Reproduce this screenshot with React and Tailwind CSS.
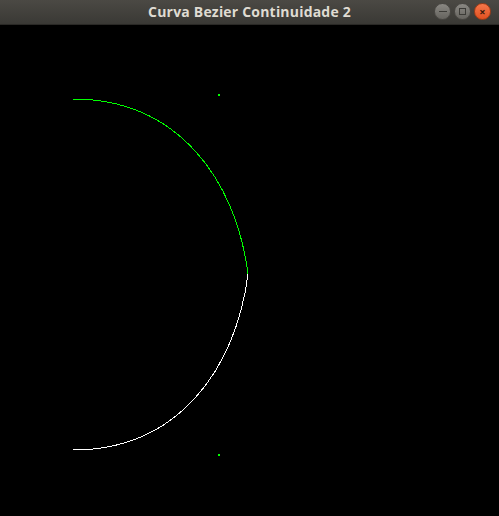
export default function App() {
  return (
    <div className="w-[499px] h-[516px] flex flex-col bg-black overflow-hidden">
      <div className="h-[25px] shrink-0 flex items-center relative bg-gradient-to-b from-[#4b4944] to-[#3a3935] border-b border-[#2a2926]">
        <div
          className="flex-1 text-center text-[14px] font-bold text-[#dfdbd2] leading-none tracking-[0.2px]"
          style={{ fontFamily: '"Open Sans", "DejaVu Sans", sans-serif' }}
        >
          Curva Bezier Continuidade 2
        </div>
        <div className="absolute right-[8px] top-[3px] flex gap-[3px]">
          <div className="w-[17px] h-[17px] rounded-full bg-gradient-to-b from-[#8a8883] to-[#66645f] border border-[#4a4844] flex items-center justify-center">
            <div className="w-[8px] h-[1.5px] bg-[#3c3b37]" />
          </div>
          <div className="w-[17px] h-[17px] rounded-full bg-gradient-to-b from-[#8a8883] to-[#66645f] border border-[#4a4844] flex items-center justify-center">
            <div className="w-[7px] h-[7px] border-[1.5px] border-[#3c3b37]" />
          </div>
          <div className="w-[17px] h-[17px] rounded-full bg-gradient-to-b from-[#f6774a] to-[#e0501f] border border-[#a33c16] flex items-center justify-center text-[#3c1a0b] text-[11px] leading-none font-bold">
            ×
          </div>
        </div>
      </div>
      <svg width="499" height="491" className="block bg-black" shapeRendering="crispEdges">
        <path d="M73,74 C178,74 236,155 248,249" fill="none" stroke="#00ff00" strokeWidth="1" />
        <path d="M248,249 C236,344 178,425 73,425" fill="none" stroke="#ffffff" strokeWidth="1" />
        <rect x="218" y="69" width="1.5" height="1.5" fill="#00ff00" />
        <rect x="218" y="429" width="1.5" height="1.5" fill="#00ff00" />
      </svg>
    </div>
  );
}
